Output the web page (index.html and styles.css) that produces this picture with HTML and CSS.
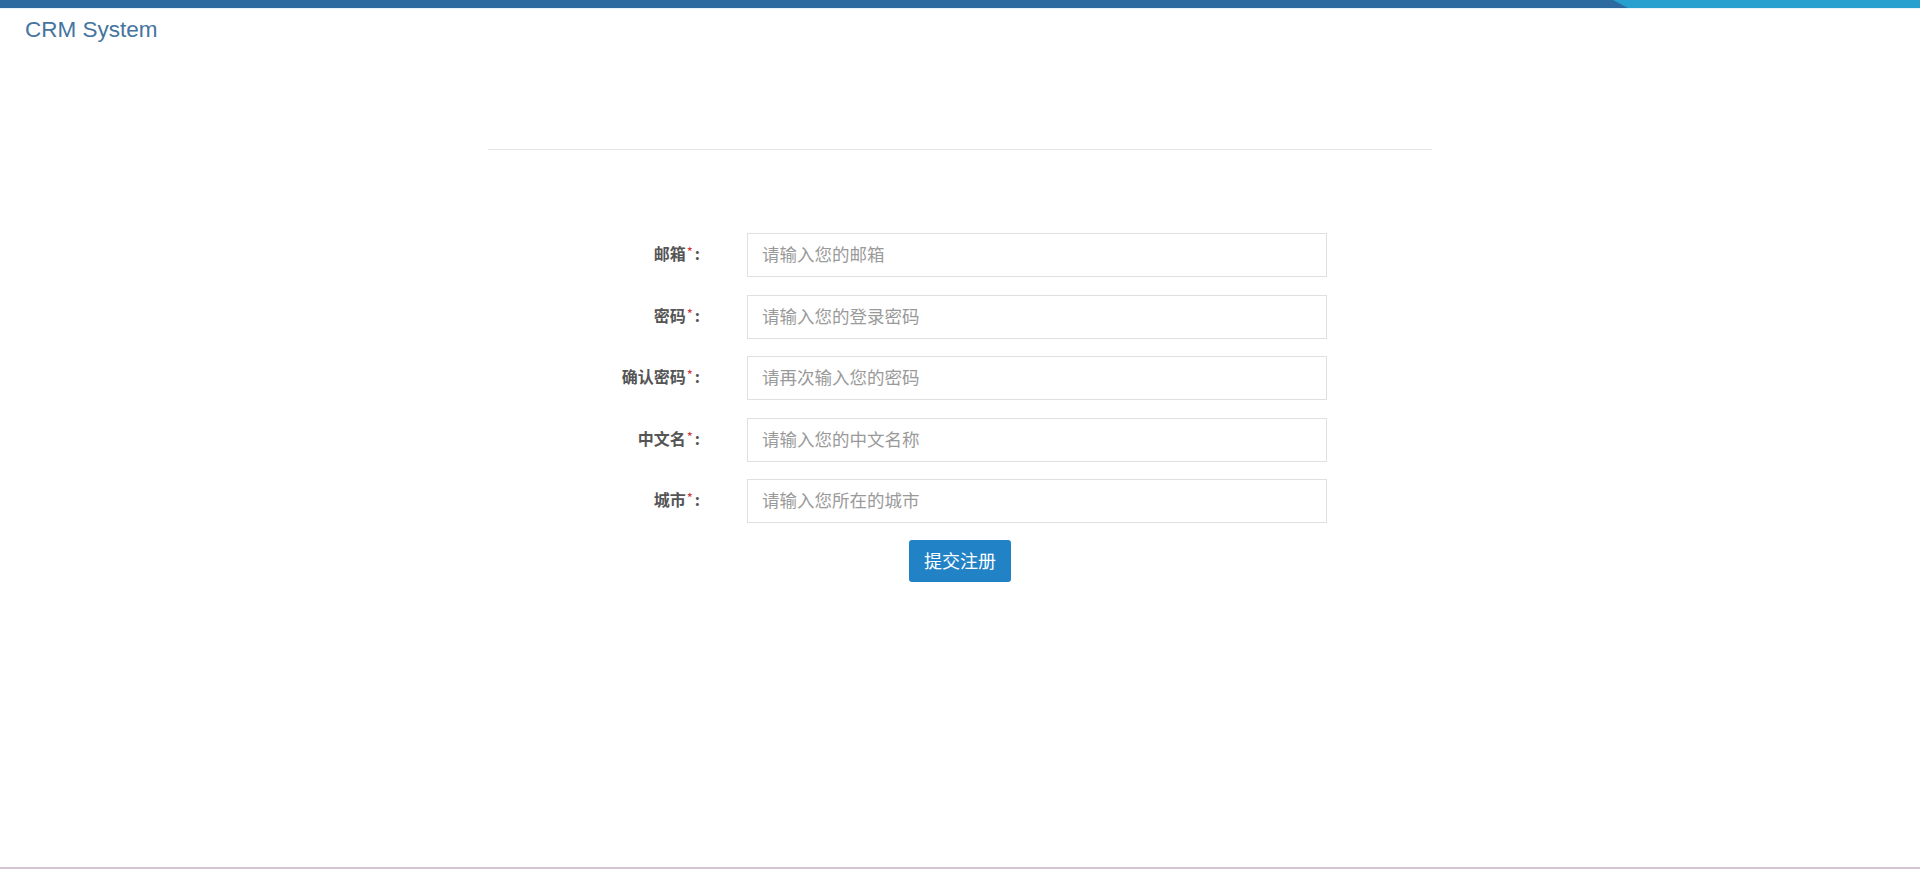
FILE: index.html
```html
<!DOCTYPE html>
<html lang="zh-CN">
<head>
<meta charset="utf-8">
<title>CRM System</title>
<link rel="stylesheet" href="styles.css">
</head>
<body>
<div class="page">
  <div class="topbar"></div>
  <header class="brand">CRM System</header>
  <main class="content">
    <hr class="divider">
    <form class="reg-form">
      <div class="form-row">
        <label class="form-label">邮箱<span class="req">*</span>:</label>
        <input class="form-input" type="text" placeholder="请输入您的邮箱">
      </div>
      <div class="form-row">
        <label class="form-label">密码<span class="req">*</span>:</label>
        <input class="form-input" type="password" placeholder="请输入您的登录密码">
      </div>
      <div class="form-row">
        <label class="form-label">确认密码<span class="req">*</span>:</label>
        <input class="form-input" type="password" placeholder="请再次输入您的密码">
      </div>
      <div class="form-row">
        <label class="form-label">中文名<span class="req">*</span>:</label>
        <input class="form-input" type="text" placeholder="请输入您的中文名称">
      </div>
      <div class="form-row">
        <label class="form-label">城市<span class="req">*</span>:</label>
        <input class="form-input" type="text" placeholder="请输入您所在的城市">
      </div>
      <div class="form-actions">
        <button class="btn-submit" type="button">提交注册</button>
      </div>
    </form>
  </main>
  <footer class="foot"></footer>
</div>
</body>
</html>
```
FILE: styles.css
```css
html, body {
  margin: 0;
  padding: 0;
  overflow: hidden;
  background: #fff;
}
.page {
  height: 870px;
  display: flex;
  flex-direction: column;
  font-family: "Noto Sans CJK SC", "Liberation Sans", sans-serif;
}
.topbar {
  position: relative;
  height: 8px;
  background: #2c6aa0;
  border-bottom: 1px solid #e8f5fa;
}
.topbar::after {
  content: "";
  position: absolute;
  top: 0;
  right: 0;
  bottom: 0;
  width: 307px;
  background: #27a0cf;
  clip-path: polygon(0 0, 100% 0, 100% 100%, 15px 100%);
}
.brand {
  padding: 8px 0 0 25px;
  font-family: "Liberation Sans", Arial, sans-serif;
  font-size: 22.5px;
  line-height: 25px;
  color: #4474a0;
}
.content {
  width: 944px;
  margin: 0 auto;
  padding-top: 107px;
}
.divider {
  margin: 0;
  border: 0;
  border-top: 1px solid #e4e4e4;
  height: 0;
}
.reg-form {
  margin-top: 83px;
  display: flex;
  flex-direction: column;
  gap: 17.5px;
}
.form-row {
  display: flex;
  align-items: center;
}
.form-label {
  width: 212px;
  margin-right: 47px;
  margin-bottom: 4px;
  text-align: right;
  font-size: 16px;
  font-weight: 700;
  color: #555;
  white-space: nowrap;
}
.req {
  color: #d0383a;
  font-weight: 400;
  font-size: 13px;
  vertical-align: 3px;
  padding: 0 2px 0 1px;
}
.form-input {
  box-sizing: border-box;
  width: 580px;
  height: 44px;
  padding: 0 14px 3px;
  border: 1px solid #e0e0e0;
  border-radius: 0;
  outline: none;
  font-family: "Noto Sans CJK SC", sans-serif;
  font-size: 17.5px;
  color: #333;
  background: #fff;
}
.form-input::placeholder {
  color: #9a9a9a;
}
.form-actions {
  display: flex;
  justify-content: center;
  margin-top: -1px;
}
.btn-submit {
  height: 42px;
  padding: 0 15px 2px;
  border: 0;
  border-radius: 3px;
  background: #2282c6;
  color: #fff;
  font-family: "Noto Sans CJK SC", sans-serif;
  font-size: 18px;
  line-height: 40px;
}
.foot {
  margin-top: auto;
  height: 1px;
  border-top: 2px solid #d6c6d0;
}
```
